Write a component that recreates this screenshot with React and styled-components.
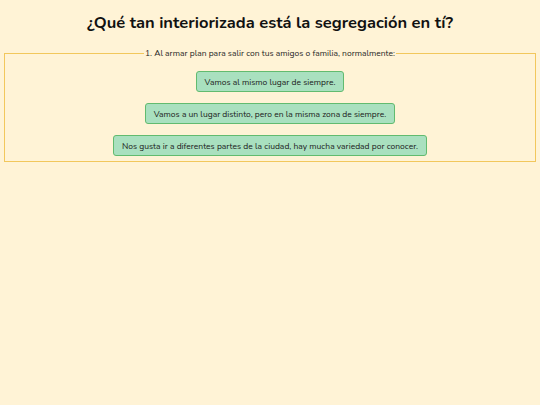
import React from "react";
import styled, { createGlobalStyle } from "styled-components";

const Global = createGlobalStyle`
  html, body {
    margin: 0;
    padding: 0;
    background-color: #fff3d6;
    font-family: "Nunito", Lato, "Noto Sans", sans-serif;
    color: #1e1e1e;
  }
`;

const Page = styled.div`
  padding: 11px 4px 0;
`;

const Title = styled.h1`
  margin: 0 0 12px;
  text-align: center;
  font-size: 16.5px;
  line-height: 24px;
  font-weight: 700;
  color: #111;
`;

const Question = styled.fieldset`
  margin: 0;
  padding: 12px 0 5px;
  border: 1px solid #f2c75c;
  display: flex;
  flex-direction: column;
  align-items: center;
  gap: 11px;
`;

const Legend = styled.legend`
  margin: 0 auto;
  padding: 0 1px;
  font-size: 8.5px;
  color: #1e1e1e;
`;

const Option = styled.button`
  font-family: inherit;
  font-size: 8.5px;
  color: #1a1a1a;
  background-color: #a9e0bf;
  border: 1px solid #62bb6f;
  border-radius: 3px;
  height: 21px;
  padding: 0 8px;
  cursor: pointer;
`;

const options = [
  "Vamos al mismo lugar de siempre.",
  "Vamos a un lugar distinto, pero en la misma zona de siempre.",
  "Nos gusta ir a diferentes partes de la ciudad, hay mucha variedad por conocer.",
];

export default function App() {
  return (
    <Page>
      <Global />
      <Title>¿Qué tan interiorizada está la segregación en tí?</Title>
      <Question>
        <Legend>1. Al armar plan para salir con tus amigos o familia, normalmente:</Legend>
        {options.map((o) => (
          <Option key={o}>{o}</Option>
        ))}
      </Question>
    </Page>
  );
}
